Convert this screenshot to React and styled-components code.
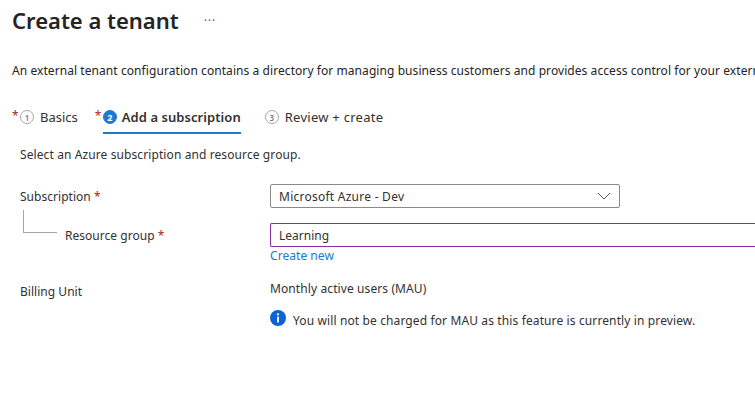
import React from "react";
import styled, { createGlobalStyle } from "styled-components";

const Global = createGlobalStyle`
  html, body { margin: 0; padding: 0; background: #fff; overflow: hidden; }
  body { font-family: "Noto Sans", "Open Sans", sans-serif; color: #323130; }
`;
const Page = styled.div`
  width: 755px; height: 403px; overflow: hidden; box-sizing: border-box; padding-top: 5px;
`;
const Header = styled.div`display: flex; align-items: center; padding-left: 12px; height: 30px;`;
const Title = styled.h1`margin: 0; font-size: 22px; font-weight: 600; line-height: 30px; color: #242424; letter-spacing: 0px;`;
const More = styled.span`margin-left: 25px; font-size: 13px; color: #666; letter-spacing: 0.5px; position: relative; top: 0;`;
const Intro = styled.p`margin: 27px 0 0 12px; font-size: 12px; line-height: 18px; white-space: nowrap; letter-spacing: 0.07px; color: #242424;`;
const Tabs = styled.div`display: flex; margin: 22px 0 0 12px; height: 32px;`;
const Tab = styled.div`display: flex; margin-right: ${p => p.$gap}px; font-size: 13px; color: #323130;`;
const TabInner = styled.div`
  display: flex; align-items: center; height: 32px; box-sizing: border-box; padding-bottom: 2px;
  font-weight: ${p => p.$active ? 600 : 400};
  letter-spacing: ${p => p.$spacing || 0}px;
  box-shadow: ${p => p.$active ? "inset 0 -2px 0 #1b7ad1" : "none"};
`;
const Star = styled.span`color: #a4262c; font-size: 12px; line-height: 14px; margin: 7px 3px 0 0; width: 5px;`;
const Num = styled.span`
  width: 14px; height: 14px; box-sizing: border-box; border-radius: 50%; margin-right: ${p => p.$after}px; letter-spacing: 0;
  display: inline-flex; align-items: center; justify-content: center; font-size: ${p => p.$active ? 9 : 8}px; font-weight: ${p => p.$active ? 700 : 600};
  border: 1px solid ${p => p.$active ? "#1b7ad1" : "#a6a6a6"};
  background: ${p => p.$active ? "#1b7ad1" : "#fff"}; color: ${p => p.$active ? "#fff" : "#777"};
`;
const Body = styled.div`padding: 13px 0 0 20px; font-size: 12px; color: #323130;`;
const Lead = styled.div`line-height: 16px; letter-spacing: 0.1px;`;
const Row = styled.div`display: grid; grid-template-columns: 250px 1fr; align-items: start; margin-top: ${p => p.$top}px;`;
const Label = styled.div`line-height: ${p => p.$line || 24}px; padding-top: 1px; padding-left: ${p => p.$indent || 0}px; position: relative; letter-spacing: 0.03px;`;
const Req = styled.span`color: #a4262c;`;
const Tree = styled.span`
  position: absolute; left: 3px; top: -13px; width: 33px; height: 22px;
  border-left: 1px solid #a6a6a6; border-bottom: 1px solid #a6a6a6;
`;
const Select = styled.div`
  width: 350px; height: 24px; box-sizing: border-box; border: 1px solid #8a8a8a; border-radius: 2px;
  display: flex; align-items: center; justify-content: space-between; padding: 0 8px; letter-spacing: 0.25px;
`;
const Input = styled.div`
  width: 500px; height: 24px; box-sizing: border-box; border: 1px solid #8a2da5; border-right: none; border-radius: 2px 0 0 2px;
  display: flex; align-items: center; padding-left: 8px;
`;
const Link = styled.a`display: block; color: #1b7ad1; line-height: 18px; letter-spacing: 0.05px;`;
const Value = styled.div`line-height: 16px; letter-spacing: 0.1px; padding-top: 1px;`;
const Info = styled.div`display: flex; align-items: flex-start; margin-top: 13px;`;
const InfoText = styled.span`margin-left: 7px; line-height: 18px; margin-top: 2px; letter-spacing: 0.12px;`;

export default function App() {
  return (
    <Page>
      <Global />
      <Header><Title>Create a tenant</Title><More>···</More></Header>
      <Intro>An external tenant configuration contains a directory for managing business customers and provides access control for your external applications.</Intro>
      <Tabs>
        <Tab $gap={17}><Star>*</Star><TabInner><Num $after={6}>1</Num>Basics</TabInner></Tab>
        <Tab $gap={24}><Star>*</Star><TabInner $active $spacing={0.06}><Num $active $after={5}>2</Num>Add a subscription</TabInner></Tab>
        <Tab $gap={0}><TabInner $spacing={0.26}><Num $after={6}>3</Num>Review + create</TabInner></Tab>
      </Tabs>
      <Body>
        <Lead>Select an Azure subscription and resource group.</Lead>
        <Row $top={21}>
          <Label>Subscription <Req>*</Req></Label>
          <Select>Microsoft Azure - Dev
            <svg width="14" height="8" viewBox="0 0 14 8" fill="none" stroke="#555" strokeWidth="1"><path d="M1 1l6 6 6-6" /></svg>
          </Select>
        </Row>
        <Row $top={14}>
          <Label $indent={45}><Tree />Resource group <Req>*</Req></Label>
          <div><Input>Learning</Input><Link>Create new</Link></div>
        </Row>
        <Row $top={15}>
          <Label $line={22}>Billing Unit</Label>
          <div>
            <Value>Monthly active users (MAU)</Value>
            <Info>
              <svg width="16" height="16" viewBox="0 0 16 16"><circle cx="8" cy="8" r="8" fill="#0f62d6" /><rect x="7.1" y="6.6" width="1.8" height="5.8" fill="#fff" /><circle cx="8" cy="4.3" r="1.15" fill="#fff" /></svg>
              <InfoText>You will not be charged for MAU as this feature is currently in preview.</InfoText>
            </Info>
          </div>
        </Row>
      </Body>
    </Page>
  );
}
